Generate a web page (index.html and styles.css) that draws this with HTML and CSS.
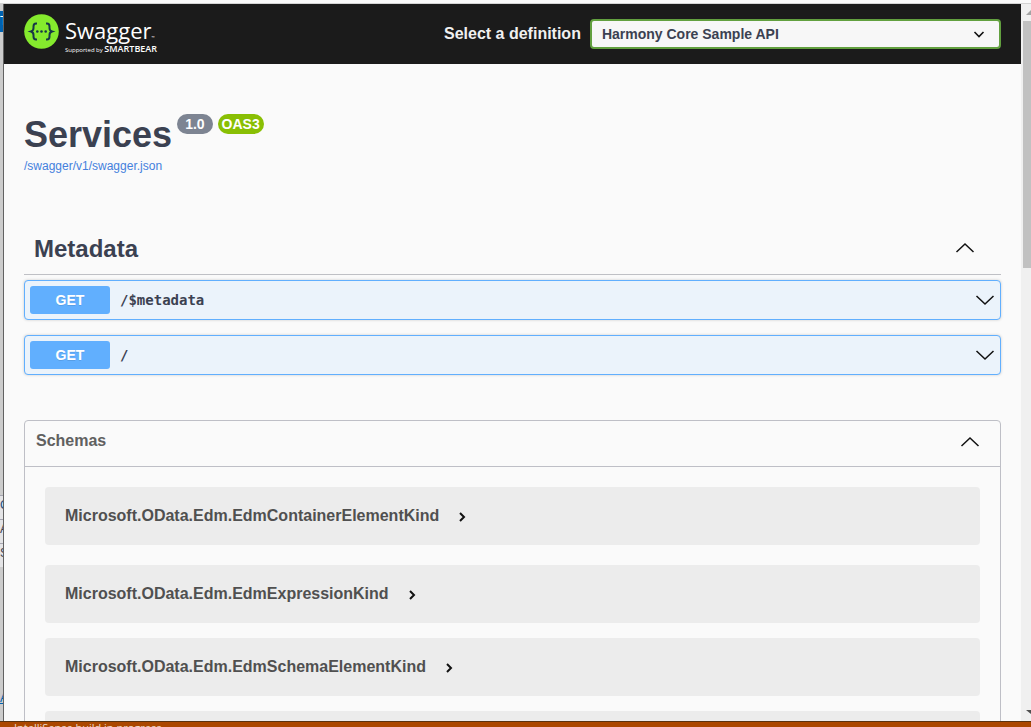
FILE: index.html
```html
<!DOCTYPE html>
<html lang="en">
<head>
<meta charset="utf-8">
<title>Swagger UI</title>
<link rel="stylesheet" href="styles.css">
</head>
<body>
<svg class="defs" aria-hidden="true">
  <symbol id="chevron-up" viewBox="0 0 20 20"><path d="M1.500 14 10 6l8.500 8"/></symbol>
  <symbol id="chevron-down" viewBox="0 0 20 20"><path d="M1.500 6 10 14l8.500-8"/></symbol>
  <symbol id="chevron-right" viewBox="0 0 20 20"><path d="m8 6 4 4-4 4"/></symbol>
</svg>
<div class="desktop">
  <div class="window-top"></div>
  <aside class="backdrop">
    <span class="backdrop-tab">Te</span>
    <span class="backdrop-line backdrop-first">C</span>
    <span class="backdrop-line">A</span>
    <span class="backdrop-line">S</span>
    <span class="backdrop-link">A</span>
  </aside>
  <div class="page">
    <header class="topbar">
      <a class="logo" href="#" aria-label="Swagger, supported by SmartBear">
        <svg class="logo-mark" viewBox="0 0 35 35" aria-hidden="true">
          <circle cx="17.500" cy="17.500" r="17.300" fill="#85ea2d"/>
          <path d="M13 9.500h-1c-2 0-2.500 1-2.500 3v1.500c0 2-.8 3-2.500 3.500 1.700.5 2.500 1.500 2.500 3.500v1.500c0 2 .5 3 2.500 3h1M22 9.500h1c2 0 2.500 1 2.500 3v1.500c0 2 .8 3 2.500 3.500-1.700.5-2.500 1.500-2.500 3.500v1.500c0 2-.5 3-2.500 3h-1" fill="none" stroke="#173647" stroke-width="2"/>
          <g fill="#173647"><circle cx="13.300" cy="17.500" r="1.300"/><circle cx="17.500" cy="17.500" r="1.300"/><circle cx="21.700" cy="17.500" r="1.300"/></g>
        </svg>
        <span class="logo-text">
          <span class="logo-name">Swagger<span class="logo-tm">™</span></span>
          <span class="logo-sub">Supported by <b>SMARTBEAR</b></span>
        </span>
      </a>
      <div class="definition">
        <label for="definition">Select a definition</label>
        <div class="select-box">
          <select id="definition"><option>Harmony Core Sample API</option></select>
          <svg class="select-arrow" viewBox="0 0 20 20" aria-hidden="true"><path d="m5.500 8 4.500 4.500L14.500 8"/></svg>
        </div>
      </div>
    </header>
    <main class="content">
      <section class="info">
        <h1>Services</h1>
        <span class="badge">1.0</span>
        <span class="badge badge-oas">OAS3</span>
        <a class="spec-link" href="#">/swagger/v1/swagger.json</a>
      </section>
      <section class="operations">
        <div class="tag-header">
          <h2>Metadata</h2>
          <button class="icon-button" aria-label="Collapse Metadata"><svg class="chevron"><use href="#chevron-up"/></svg></button>
        </div>
        <button class="operation"><span class="method">GET</span><span class="path">/$metadata</span><svg class="chevron"><use href="#chevron-down"/></svg></button>
        <button class="operation"><span class="method">GET</span><span class="path">/</span><svg class="chevron"><use href="#chevron-down"/></svg></button>
      </section>
      <section class="schemas">
        <div class="schemas-header">
          <h2>Schemas</h2>
          <button class="icon-button" aria-label="Collapse Schemas"><svg class="chevron"><use href="#chevron-up"/></svg></button>
        </div>
        <div class="schema-list">
          <button class="schema schema-first">Microsoft.OData.Edm.EdmContainerElementKind<svg class="chevron chevron-small"><use href="#chevron-right"/></svg></button>
          <button class="schema">Microsoft.OData.Edm.EdmExpressionKind<svg class="chevron chevron-small"><use href="#chevron-right"/></svg></button>
          <button class="schema">Microsoft.OData.Edm.EdmSchemaElementKind<svg class="chevron chevron-small"><use href="#chevron-right"/></svg></button>
          <button class="schema" aria-label="More schemas"></button>
        </div>
      </section>
    </main>
  </div>
  <div class="scrollbar" aria-hidden="true">
    <svg class="scroll-arrow" viewBox="0 0 8 17"><path d="m3 11 5-5v5z" fill="#a3a3a3"/></svg>
    <div class="scroll-thumb"></div>
    <svg class="scroll-arrow scroll-down" viewBox="0 0 8 17"><path d="M3 6h5v4z" fill="#505050"/></svg>
  </div>
  <footer class="statusbar"><span>IntelliSense build in progress</span></footer>
</div>
</body>
</html>
```

FILE: styles.css
```css
* { box-sizing: border-box; }
body {
  margin: 0;
  font-family: "Liberation Sans", Arial, sans-serif;
  color: #3b4151;
  background: #fafafa;
}
button { font: inherit; color: inherit; cursor: pointer; }
h1, h2 { margin: 0; }
.defs { display: none; }

.desktop {
  display: grid;
  grid-template: 4px minmax(0, 1fr) 6px / 4px minmax(0, 1fr) 10px;
  height: 100vh;
  overflow: hidden;
}
.window-top {
  grid-column: 1 / -1;
  border-bottom: 1px solid #d4d4d4;
}
.backdrop {
  display: flex;
  flex-direction: column;
  overflow: hidden;
  border-right: 1px solid #626262;
  background: #cccccc;
  font-size: 12px;
}
.backdrop-tab {
  height: 21px;
  margin-top: 7px;
  line-height: 21px;
  color: #fff;
  background: #0062b1;
}
.backdrop-line {
  height: 24px;
  line-height: 18px;
  border-top: 1px solid #a5a5b0;
  background: #e4e4e6;
}
.backdrop-first { margin-top: 463px; color: #1c4d80; }
.backdrop-link { margin-top: 124px; color: #0062b1; text-decoration: underline; }

.page { overflow: hidden; }
.topbar {
  display: flex;
  justify-content: space-between;
  height: 60px;
  padding: 10px 20px;
  background: #1b1b1b;
}
.logo {
  display: flex;
  gap: 6px;
  color: #fff;
  text-decoration: none;
  font-family: "Open Sans", sans-serif;
}
.logo-mark { width: 35px; height: 35px; }
.logo-text { display: flex; flex-direction: column; }
.logo-name {
  height: 31px;
  font-size: 22px;
  font-weight: 400;
  line-height: 32px;
}
.logo-tm { font-size: 4px; }
.logo-sub {
  font-size: 6px;
  line-height: 8px;
  white-space: nowrap;
}
.logo-sub b { font-size: 9px; font-weight: 600; }
.definition {
  display: flex;
  align-items: center;
  gap: 9px;
  width: 557px;
  color: #f0f0f0;
  font-weight: 700;
}
.definition label { white-space: nowrap; }
.select-box { position: relative; flex: 1; }
.select-box select {
  display: block;
  width: 100%;
  height: 30px;
  padding: 0 40px 0 10px;
  border: 2px solid #62a03f;
  border-radius: 4px;
  appearance: none;
  background: #f7f7f7;
  color: #3b4151;
  font: 700 14px "Liberation Sans", Arial, sans-serif;
}
.select-arrow {
  position: absolute;
  top: 5px;
  right: 12px;
  width: 20px;
  height: 20px;
  fill: none;
  stroke: #111;
  stroke-width: 1.6;
  pointer-events: none;
}

.content { padding: 50px 20px 0; }
.info {
  display: grid;
  grid-template-columns: auto auto 1fr;
  column-gap: 5px;
  justify-items: start;
}
.info h1 { font-size: 36px; line-height: 42px; }
.badge {
  height: 20px;
  padding: 0 8px;
  border-radius: 10px;
  background: #7d8492;
  color: #fff;
  font-size: 14px;
  font-weight: 700;
  line-height: 20px;
}
.badge-oas { padding: 0 4px; background: #89bf04; }
.spec-link {
  grid-column: 1 / -1;
  margin-top: 2px;
  color: #4480dd;
  font-size: 12px;
  line-height: 16px;
  text-decoration: none;
}

.operations { margin-top: 50px; }
.tag-header {
  display: flex;
  align-items: center;
  justify-content: space-between;
  height: 51px;
  margin-bottom: 5px;
  padding: 0 26px 0 10px;
  border-bottom: 1px solid #bfc0c5;
}
.tag-header h2 { font-size: 24px; line-height: 28px; }
.tag-header .icon-button { padding-bottom: 2px; }
.icon-button {
  display: flex;
  padding: 0;
  border: 0;
  background: none;
}
.chevron {
  width: 20px;
  height: 20px;
  fill: none;
  stroke: #111;
  stroke-width: 1.5;
}
.operation {
  display: flex;
  align-items: center;
  width: 100%;
  height: 40px;
  margin-bottom: 15px;
  padding: 5px;
  border: 1px solid #61affe;
  border-radius: 4px;
  background: #ebf3fb;
  box-shadow: 0 0 3px rgba(0, 0, 0, 0.19);
  text-align: left;
}
.method {
  width: 80px;
  border-radius: 3px;
  background: #61affe;
  color: #fff;
  font-size: 14px;
  font-weight: 700;
  line-height: 28px;
  text-align: center;
  text-shadow: 0 1px 0 rgba(0, 0, 0, 0.1);
}
.path {
  flex: 1;
  padding-left: 10px;
  font: 700 14px "DejaVu Sans Mono", monospace;
}

.schemas {
  margin-top: 45px;
  border: 1px solid #bebfc6;
  border-radius: 4px;
}
.schemas-header {
  display: flex;
  align-items: center;
  justify-content: space-between;
  height: 46px;
  padding: 0 20px 6px 11px;
  border-bottom: 1px solid #bebfc6;
}
.schemas-header h2 { color: #606060; font-size: 16px; line-height: 20px; }
.schemas-header .icon-button { padding-top: 2px; }
.schema-list {
  display: flex;
  flex-direction: column;
  gap: 15px;
  padding: 20px;
}
.schema {
  display: flex;
  align-items: center;
  gap: 13px;
  height: 58px;
  padding: 0 20px;
  border: 0;
  border-radius: 4px;
  background: #ececec;
  color: #505050;
  font-size: 16px;
  font-weight: 700;
}
.schema-first { margin-bottom: 5px; }
.chevron-small { margin-top: 2px; stroke-width: 2; }

.scrollbar {
  display: flex;
  flex-direction: column;
  padding-left: 2px;
  background: #f0f0f0;
}
.scroll-arrow { flex: none; width: 8px; height: 17px; }
.scroll-down { margin-top: auto; }
.scroll-thumb { height: 247px; background: #c1c1c1; }

.statusbar {
  grid-column: 1 / -1;
  overflow: hidden;
  padding-left: 14px;
  border-top: 1px solid #5b3310;
  background: #ab4700;
  color: #eedccb;
  font: 11px/12px "Open Sans", sans-serif;
}
```
